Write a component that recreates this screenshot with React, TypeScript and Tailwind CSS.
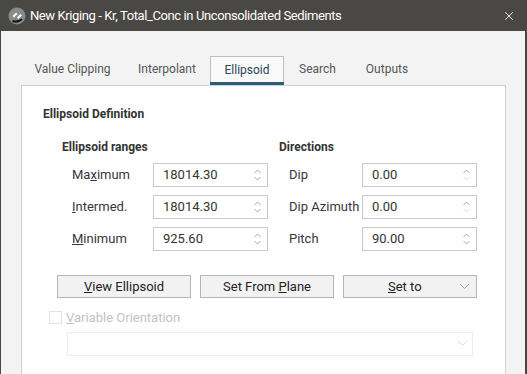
import { X } from 'lucide-react';

const Spin = ({ downOff = false }: { downOff?: boolean }) => (
    <svg width="9" height="16" viewBox="0 0 9 16" className="shrink-0">
        <path d="M1.5 6 L4.5 3 L7.5 6" fill="none" stroke="#a8a8a8" strokeWidth="1" />
        <path d="M1.5 10 L4.5 13 L7.5 10" fill="none" stroke={downOff ? '#e0e0e0' : '#a8a8a8'} strokeWidth="1" />
    </svg>
);

const Chevron = ({ color }: { color: string }) => (
    <svg width="11" height="7" viewBox="0 0 11 7">
        <path d="M1 1 L5.5 5.5 L10 1" fill="none" stroke={color} strokeWidth="1" />
    </svg>
);

const Field = ({ value, downOff }: { value: string; downOff?: boolean }) => (
    <div className="w-[115px] h-[24px] border border-[#c9c9c9] bg-white flex items-center pl-[9px] pr-[5px]">
        <span className="flex-1 text-[13px] text-[#333]">{value}</span>
        <Spin downOff={downOff} />
    </div>
);

const Row = ({ label, value, labelW, downOff }: { label: React.ReactNode; value: string; labelW: string; downOff?: boolean }) => (
    <div className="flex items-center h-[24px]">
        <span className={`${labelW} text-[13px] text-[#3b3340]`}>{label}</span>
        <Field value={value} downOff={downOff} />
    </div>
);

const tabs = [
    { name: 'Value Clipping', w: 'w-[103px]' },
    { name: 'Interpolant', w: 'w-[86px]' },
    { name: 'Ellipsoid', w: 'w-[74px]' },
    { name: 'Search', w: 'w-[67px]' },
    { name: 'Outputs', w: 'w-[72px]' },
];

const App = () => {
    return (
        <div className="w-[527px] h-[374px] overflow-hidden bg-[#f3f3f3] border-l border-r-2 border-[#4a4845] flex flex-col" style={{ fontFamily: 'Roboto, "Liberation Sans", sans-serif' }}>
            {/* title bar */}
            <div className="h-[31px] shrink-0 bg-[#4a4845] flex items-center pl-[8px] pr-[11px] -ml-px -mr-[2px]">
                <svg width="18" height="18" viewBox="0 0 18 18" className="shrink-0">
                    <circle cx="9" cy="9" r="8.5" fill="#8a8a8a" />
                    <path d="M4.5 9 L8 5.5 L9.5 7 L6 10.5 Z" fill="#fff" />
                    <path d="M9 10.5 L12.5 7 L13.8 8.5 L10.3 12 Z" fill="#fff" />
                    <path d="M5 13 Q9 14.5 13.5 11.5 L14.5 13 Q9 17.5 4 14.5 Z" fill="#111" />
                </svg>
                <span className="ml-[4px] flex-1 text-white text-[13px] tracking-[-0.4px]">
                    New Kriging - Kr, Total_Conc in Unconsolidated Sediments
                </span>
                <X className="w-[14px] h-[14px] text-white" strokeWidth={1.5} />
            </div>

            <div className="flex-1 pl-[20px] pt-[25px]">
                {/* tabs */}
                <div className="flex h-[29px]">
                    {tabs.map((t) =>
                        t.name === 'Ellipsoid' ? (
                            <div key={t.name} className={`${t.w} border border-b-0 border-[#b4c0cb] bg-[#fafafa] flex flex-col`}>
                                <span className="flex-1 flex items-center justify-center text-[12px] text-[#2e4457]">{t.name}</span>
                                <div className="h-[3px] bg-[#2d5d7c] -mx-px" />
                            </div>
                        ) : (
                            <div key={t.name} className={`${t.w} flex items-center justify-center pb-[3px] text-[12px] text-[#555]`}>
                                {t.name}
                            </div>
                        )
                    )}
                </div>

                {/* panel */}
                <div className="w-[485px] h-[300px] bg-white border border-[#cfcfcf] pt-[20px] pl-[21px]">
                    <div className="text-[12px] font-bold text-[#333] leading-[16px]">Ellipsoid Definition</div>

                    <div className="flex mt-[17px]">
                        <div className="pl-[19px] w-[236px]">
                            <div className="text-[12px] font-bold text-[#333] leading-[16px]">Ellipsoid ranges</div>
                            <div className="flex flex-col gap-[8px] mt-[8px] pl-[10px]">
                                <Row label={<>Ma<u>x</u>imum</>} value="18014.30" labelW="w-[81px]" />
                                <Row label={<><u>I</u>ntermed.</>} value="18014.30" labelW="w-[81px]" />
                                <Row label={<><u>M</u>inimum</>} value="925.60" labelW="w-[81px]" />
                            </div>
                        </div>
                        <div>
                            <div className="text-[12px] font-bold text-[#333] leading-[16px]">Directions</div>
                            <div className="flex flex-col gap-[8px] mt-[8px] pl-[10px]">
                                <Row label="Dip" value="0.00" labelW="w-[73px]" downOff />
                                <Row label="Dip Azimuth" value="0.00" labelW="w-[73px]" downOff />
                                <Row label="Pitch" value="90.00" labelW="w-[73px]" />
                            </div>
                        </div>
                    </div>

                    {/* buttons */}
                    <div className="flex gap-[9px] mt-[24px] ml-[14px] text-[13px] text-[#222]">
                        <button className="w-[134px] h-[23px] bg-[#f2f2f2] border border-[#b5b5b5]">
                            <u>V</u>iew Ellipsoid
                        </button>
                        <button className="w-[134px] h-[23px] bg-[#f2f2f2] border border-[#b5b5b5]">
                            Set From <u>P</u>lane
                        </button>
                        <button className="w-[134px] h-[23px] bg-[#f2f2f2] border border-[#b5b5b5] flex items-center pl-[44px] pr-[6px]">
                            <span className="flex-1 text-left"><u>S</u>et to</span>
                            <Chevron color="#a8a8a8" />
                        </button>
                    </div>

                    {/* variable orientation */}
                    <div className="flex items-center mt-[10px] ml-[6px]">
                        <div className="w-[13px] h-[13px] border border-[#e3e3e3] bg-white" />
                        <span className="ml-[4px] text-[13px] text-[#c2c2c2]"><u>V</u>ariable Orientation</span>
                    </div>
                    <div className="w-[406px] h-[24px] mt-[4px] ml-[24px] border border-[#ececec] flex items-center justify-end pr-[4px]">
                        <Chevron color="#dcdcdc" />
                    </div>
                </div>
            </div>
        </div>
    );
};

export default App;
